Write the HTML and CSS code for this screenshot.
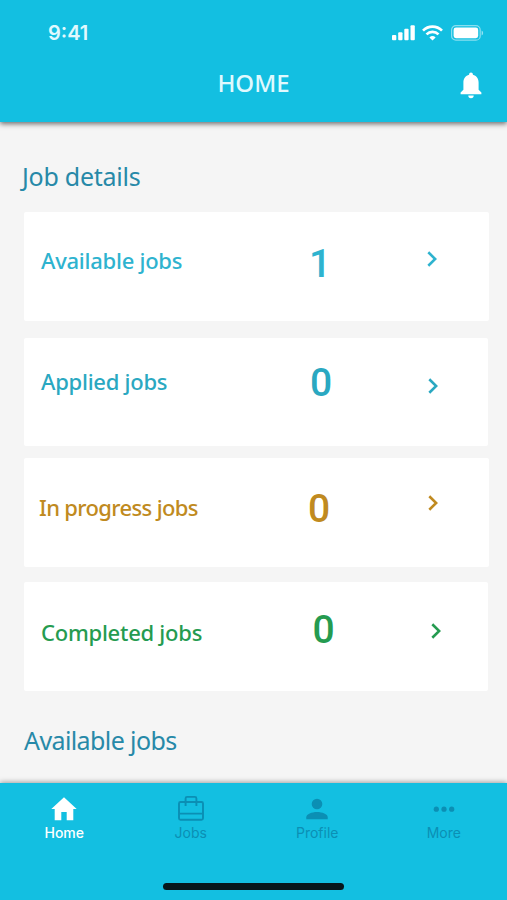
FILE: index.html
```html
<!DOCTYPE html>
<html lang="en">
<head>
  <meta charset="UTF-8">
  <meta name="viewport" content="width=device-width, initial-scale=1.0">
  <title>Home</title>
  <link rel="stylesheet" href="styles.css">
</head>
<body>
  <header>
    <div class="status-bar">
      <span class="time">9:41</span>
      <svg class="signal" width="23" height="16" viewBox="0 0 23 16" fill="currentColor">
        <rect x="0" y="10" width="4.3" height="5.3" rx="1"/>
        <rect x="6.2" y="7.3" width="4.3" height="8" rx="1"/>
        <rect x="12.3" y="3.8" width="4.3" height="11.5" rx="1"/>
        <rect x="18.5" y="0.3" width="4.3" height="15" rx="1"/>
      </svg>
      <svg class="wifi" width="21" height="16" viewBox="0 0 21 16" fill="none" stroke="currentColor" stroke-width="2.7">
        <path d="M1 5.6a13.5 13.5 0 0 1 19 0"/>
        <path d="M4.5 9.4a8.6 8.6 0 0 1 12 0"/>
        <path d="M10.5 15.6l-3.1-3.2a4.5 4.5 0 0 1 6.2 0z" fill="currentColor" stroke="none"/>
      </svg>
      <svg class="battery" width="33" height="16" viewBox="0 0 33 16">
        <rect x="0.6" y="0.6" width="28.6" height="14.6" rx="4.3" fill="none" stroke="currentColor" stroke-width="1.2" opacity="0.5"/>
        <rect x="2.6" y="2.6" width="24.6" height="10.6" rx="2.4" fill="currentColor"/>
        <path d="M30.6 5.4v5c2-.9 2-4.1 0-5z" fill="currentColor" opacity="0.55"/>
      </svg>
    </div>
    <div class="title-bar">
      <h1>HOME</h1>
      <svg class="bell" width="22" height="27" viewBox="0 0 22 27" fill="currentColor">
        <path d="M11 .4c-1.1 0-1.9.8-1.9 1.9v.5C5.6 3.6 3.4 6.600 3.4 10.4v7.4L.6 20.6v1.6h20.8v-1.6l-2.8-2.8v-7.4c0-3.8-2.2-6.8-5.7-7.6v-.5c0-1.1-.8-1.9-1.9-1.9z"/>
        <path d="M8.3 23.5h5.4a2.7 2.7 0 0 1-5.4 0z"/>
      </svg>
    </div>
  </header>

  <main>
    <h2 class="details-heading">Job details</h2>

    <section class="card available">
      <span class="label">Available jobs</span>
      <span class="count">1</span>
      <svg class="arrow" viewBox="0 0 10 16"><path d="M1.3 1.3l6.9 6.7-6.9 6.7"/></svg>
    </section>
    <section class="card applied">
      <span class="label">Applied jobs</span>
      <span class="count">0</span>
      <svg class="arrow" viewBox="0 0 10 16"><path d="M1.3 1.3l6.9 6.7-6.9 6.7"/></svg>
    </section>
    <section class="card progress">
      <span class="label">In progress jobs</span>
      <span class="count">0</span>
      <svg class="arrow" viewBox="0 0 10 16"><path d="M1.3 1.3l6.9 6.7-6.9 6.7"/></svg>
    </section>
    <section class="card completed">
      <span class="label">Completed jobs</span>
      <span class="count">0</span>
      <svg class="arrow" viewBox="0 0 10 16"><path d="M1.3 1.3l6.9 6.7-6.9 6.7"/></svg>
    </section>

    <h2 class="available-heading">Available jobs</h2>
  </main>

  <footer>
    <nav>
      <a class="tab active">
        <svg width="28" height="28" viewBox="0 0 28 28" fill="currentColor">
          <path d="M14 3.3L1.300 15h3.400v11.200h6.600v-8.100h5.400v8.100h6.600V15h3.400z"/>
        </svg>
        <span>Home</span>
      </a>
      <a class="tab">
        <svg width="28" height="28" viewBox="0 0 28 28" fill="none" stroke="currentColor" stroke-width="1.9">
          <rect x="2" y="8" width="24" height="17.800" rx="1.500"/>
          <path d="M8.600 12V4.400q0-1.500 1.500-1.500h7.800q1.500 0 1.500 1.500V12M2 19.600h24"/>
        </svg>
        <span>Jobs</span>
      </a>
      <a class="tab">
        <svg width="28" height="28" viewBox="0 0 28 28" fill="currentColor">
          <circle cx="14" cy="10" r="5.300"/>
          <path d="M3.300 25.200v-2c0-3 5.500-5.200 10.700-5.200s10.700 2.200 10.700 5.200v2z"/>
        </svg>
        <span>Profile</span>
      </a>
      <a class="tab">
        <svg width="28" height="28" viewBox="0 0 28 28" fill="currentColor">
          <circle cx="6.300" cy="15.200" r="2.600"/>
          <circle cx="14" cy="15.200" r="2.600"/>
          <circle cx="21.700" cy="15.200" r="2.600"/>
        </svg>
        <span>More</span>
      </a>
    </nav>
    <div class="home-indicator"></div>
  </footer>
</body>
</html>
```
FILE: styles.css
```css
* {
  box-sizing: border-box;
}

body {
  margin: 0;
  height: 900px;
  display: flex;
  flex-direction: column;
  overflow: hidden;
  background: #f5f5f5;
  font-family: "Noto Sans", sans-serif;
}

header {
  height: 122px;
  color: white;
  background: #13bfe1;
  box-shadow: 0 2px 5px rgba(0, 0, 0, 0.55);
}

.status-bar {
  display: flex;
  align-items: center;
  height: 66px;
  padding: 0 23px 0 48px;
}

.time {
  margin-right: auto;
  color: #e0f9fe;
  font-family: Inter, sans-serif;
  font-size: 20px;
  font-weight: 600;
}

.wifi {
  margin: 0 8px 0 7px;
}

.title-bar {
  display: grid;
  grid-template-columns: 1fr auto 1fr;
  align-items: center;
  height: 38px;
  padding: 0 25px;
}

h1 {
  grid-column: 2;
  margin: 0 0 4px;
  color: #e0f9fe;
  font-size: 24px;
  font-weight: 500;
  line-height: 34px;
}

.bell {
  justify-self: end;
}

main {
  flex: 1;
  padding: 0 18px 0 24px;
}

h2 {
  margin: 0;
  color: #2789a8;
  font-size: 25px;
  font-weight: 400;
  line-height: 34px;
}

.details-heading {
  margin: 37px 0 19px -2px;
  letter-spacing: -0.25px;
}

.available-heading {
  margin-top: 32px;
  letter-spacing: -0.6px;
}

.card {
  display: grid;
  grid-template-columns: 249px 60px 1fr;
  align-items: start;
  height: 109px;
  padding-left: 17px;
  border-radius: 2px;
  background: white;
}

.label {
  font-size: 22px;
  font-weight: 500;
  line-height: 30px;
  letter-spacing: -0.25px;
}

.count {
  text-align: center;
  font-family: Roboto, sans-serif;
  font-size: 39px;
  font-weight: 500;
  line-height: 40px;
}

.arrow {
  width: 10px;
  height: 16px;
  fill: none;
  stroke: currentColor;
  stroke-width: 2.6;
}

.available {
  color: #2eb3cf;
}

.available .label {
  margin-top: 33px;
}

.available .count {
  margin-top: 32px;
}

.available .arrow {
  margin: 39px 0 0 77px;
}

.applied {
  height: 108px;
  margin: 17px 1px 0 0;
  color: #2aa8c1;
}

.applied .label {
  margin-top: 28px;
}

.applied .count {
  margin: 25px 0 0 2px;
}

.applied .arrow {
  margin: 40px 0 0 78px;
}

.progress {
  margin-top: 12px;
  padding-left: 15px;
  color: #c08a20;
}

.progress .label {
  margin-top: 34px;
  letter-spacing: -0.65px;
}

.progress .count {
  margin: 31px 0 0 2px;
}

.progress .arrow {
  margin: 37px 0 0 80px;
}

.completed {
  margin: 15px 1px 0 0;
  color: #259b50;
}

.completed .label {
  margin-top: 35px;
}

.completed .count {
  margin: 28px 0 0 7px;
}

.completed .arrow {
  margin: 41px 0 0 81px;
}

footer {
  display: flex;
  flex-direction: column;
  align-items: center;
  height: 117px;
  background: #13bfe1;
  box-shadow: 0 -1px 5px rgba(0, 0, 0, 0.35);
}

nav {
  display: grid;
  grid-template-columns: repeat(4, 1fr);
  width: 100%;
  height: 100px;
  padding: 11px 0 0 1px;
}

.tab {
  display: flex;
  flex-direction: column;
  align-items: center;
  color: #0b8fb4;
  font-family: Inter, sans-serif;
  font-size: 14px;
  line-height: 22px;
}

.tab.active {
  color: white;
  font-weight: 500;
}

.home-indicator {
  width: 181px;
  height: 7px;
  border-radius: 4px;
  background: #07171b;
}
```
